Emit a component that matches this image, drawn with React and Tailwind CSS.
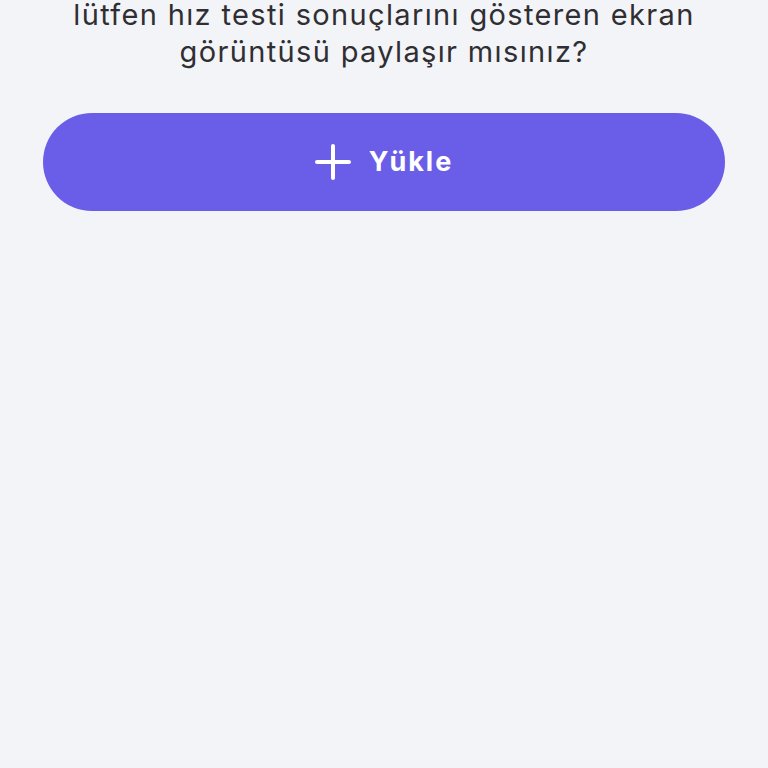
export default function App() {
  return (
    <div className="min-h-[768px] w-full bg-[#f3f4f8] overflow-hidden" style={{ fontFamily: 'Inter, "Open Sans", sans-serif' }}>
      <div className="px-[43px]">
        {/* question text, top line scrolled off */}
        <p className="-mt-[4px] text-center text-[29px] leading-[37px] tracking-[1.35px] text-[#2f2f33]">
          lütfen hız testi sonuçlarını gösteren ekran
          <br />
          görüntüsü paylaşır mısınız?
        </p>

        {/* upload button */}
        <button className="mt-[43px] flex h-[98px] w-full items-center justify-center gap-[18px] rounded-full bg-[#6a5ee8] text-white">
          <svg width="36" height="36" viewBox="0 0 36 36" fill="none" stroke="currentColor" strokeWidth="4" strokeLinecap="round">
            <path d="M18 2v32M2 18h32" />
          </svg>
          <span className="text-[27px] font-bold tracking-[2px]">Yükle</span>
        </button>
      </div>
    </div>
  )
}
